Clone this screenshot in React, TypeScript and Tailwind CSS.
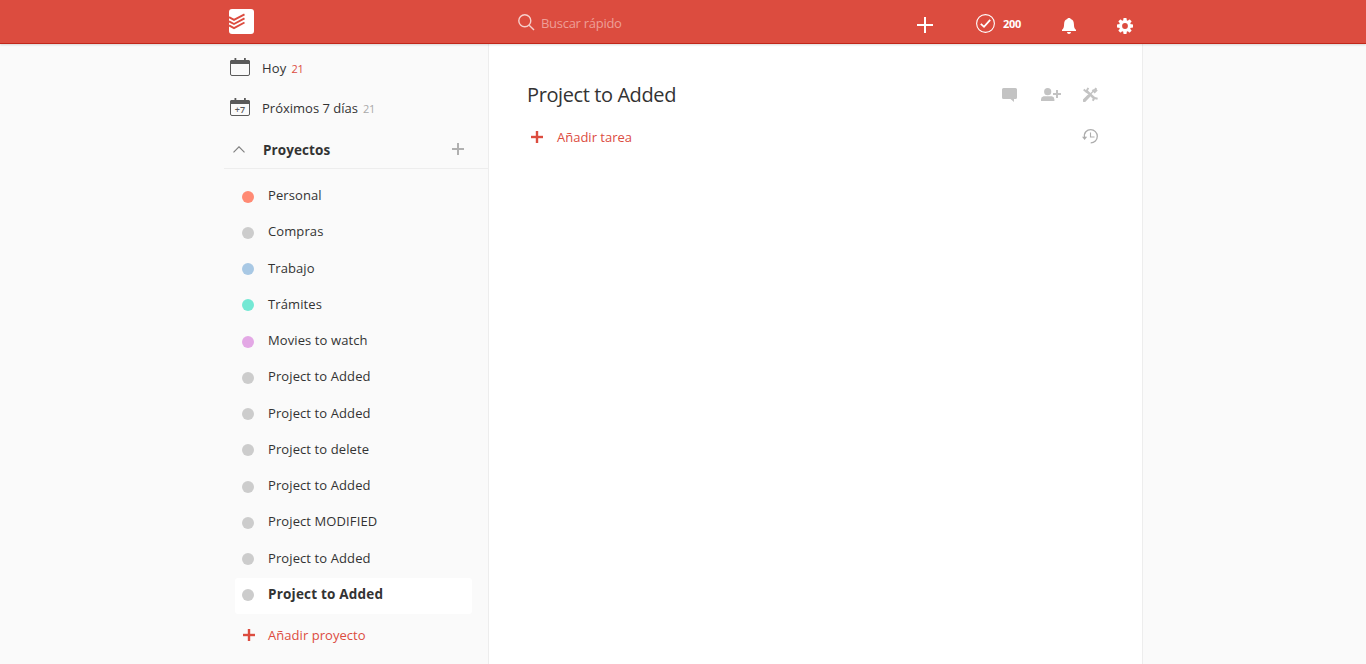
import React from "react";

const projects = [
  { name: "Personal", dot: "bg-[#ff8a74]" },
  { name: "Compras", dot: "bg-[#cccccc]" },
  { name: "Trabajo", dot: "bg-[#a8c8e4]" },
  { name: "Trámites", dot: "bg-[#74e8d4]" },
  { name: "Movies to watch", dot: "bg-[#e3a8e5]" },
  { name: "Project to Added", dot: "bg-[#cccccc]" },
  { name: "Project to Added", dot: "bg-[#cccccc]" },
  { name: "Project to delete", dot: "bg-[#cccccc]" },
  { name: "Project to Added", dot: "bg-[#cccccc]" },
  { name: "Project MODIFIED", dot: "bg-[#cccccc]" },
  { name: "Project to Added", dot: "bg-[#cccccc]" },
  { name: "Project to Added", dot: "bg-[#cccccc]", selected: true },
];

function Logo() {
  return (
    <svg width="25" height="25" viewBox="0 0 25 25" className="ml-[5px] mt-[9px] shrink-0">
      <rect width="25" height="25" rx="3" fill="#fff" />
      <g fill="none" stroke="#dc4c3f" strokeWidth="1.9">
        <path d="M0 8.200 5 10.900 15.500 5.300" />
        <path d="M0 12.300 5 15 15.500 9.400" />
        <path d="M0 16.400 5 19.100 15.500 13.500" />
      </g>
    </svg>
  );
}

function Calendar({ label }: { label?: string }) {
  return (
    <span className="relative block h-[18px] w-5 shrink-0">
      <svg width="20" height="18" viewBox="0 0 20 18" className="block">
        <rect x="0.5" y="2.5" width="19" height="15" rx="1.5" fill="none" stroke="#5a5a5a" />
        <path d="M0 6V3.500Q0 2 1.500 2H18.500Q20 2 20 3.500V6Z" fill="#5a5a5a" />
        <path d="M4.500 0h1.800v3H4.500zM14 0h1.800v3H14z" fill="#5a5a5a" />
      </svg>
      {label && (
        <span className="absolute left-0 top-[6px] w-5 text-center text-[9px] font-semibold leading-[11px] text-[#5a5a5a]">
          {label}
        </span>
      )}
    </span>
  );
}

function Plus({ className, size, weight }: { className: string; size: number; weight: number }) {
  const start = (size - weight) / 2;
  return (
    <svg width={size} height={size} className={className} fill="currentColor">
      <rect x={start} width={weight} height={size} />
      <rect y={start} width={size} height={weight} />
    </svg>
  );
}

function Header() {
  return (
    <header className="relative h-11 border-b border-[#c1271a] bg-[#dc4c3f] shadow-[0_1px_2px_rgba(0,0,0,0.15)]">
      <div className="ml-[224px] flex w-[919px] items-start">
        <Logo />
        <div className="ml-[264px] flex w-[399px] items-start">
          <svg width="17" height="17" viewBox="0 0 17 17" className="mt-[14px]" fill="none" stroke="#f6d0cc" strokeWidth="1.400">
            <circle cx="6.800" cy="6.800" r="6" />
            <path d="m11.200 11.200 4.800 4.800" />
          </svg>
          <span className="ml-[6px] mt-[13px] text-[13px] leading-5 tracking-[-0.28px] text-[#ee9f97]">Buscar rápido</span>
        </div>
        <Plus className="mt-[17px] text-white" size={16} weight={2} />
        <div className="ml-[43px] flex w-[86px] items-start">
          <svg width="19" height="19" viewBox="0 0 19 19" className="mt-[14px]" fill="none" stroke="#fff">
            <circle cx="9.500" cy="9.500" r="8.900" strokeWidth="1.100" />
            <path d="m4.800 9.800 3.200 3 6.200-7" strokeWidth="1.800" />
          </svg>
          <span className="ml-2 mt-4 text-[11px] font-bold leading-4 tracking-[-0.25px] text-white">200</span>
        </div>
        <svg width="14" height="16" viewBox="0 0 14 16" className="mt-[18px]" fill="#fff">
          <path d="M7 0c1 0 1.500.400 1.700 1C11 1.700 11.800 3.500 11.900 6c.1 3.400.6 4.700 2.100 5.800V13H0v-1.200C1.500 10.700 2 9.400 2.100 6 2.200 3.500 3 1.700 5.300 1 5.500.4 6 0 7 0ZM5 14h4c-.2 1.300-.8 2-2 2s-1.800-.7-2-2Z" />
        </svg>
        <svg width="16" height="16" viewBox="0 0 16 16" className="ml-[41px] mt-[18px]" fill="#fff">
          <g>
            <rect x="6.300" y="0" width="3.400" height="16" rx="0.800" />
            <rect x="6.300" y="0" width="3.400" height="16" rx="0.800" transform="rotate(45 8 8)" />
            <rect x="6.300" y="0" width="3.400" height="16" rx="0.800" transform="rotate(90 8 8)" />
            <rect x="6.300" y="0" width="3.400" height="16" rx="0.800" transform="rotate(135 8 8)" />
          </g>
          <circle cx="8" cy="8" r="6" />
          <circle cx="8" cy="8" r="2.900" fill="#dc4c3f" />
        </svg>
      </div>
    </header>
  );
}

function Sidebar() {
  return (
    <aside className="w-[264px] shrink-0 text-[#333]">
      <div className="flex h-10 items-start pl-[6px] pt-[14px]">
        <Calendar />
        <span className="ml-3 text-[13px] leading-5 tracking-[0.2px]">Hoy</span>
        <span className="ml-[5px] mt-px text-[11px] leading-5 tracking-[-0.3px] text-[#dc4c3f]">21</span>
      </div>
      <div className="flex h-10 items-start pl-[6px] pt-[14px]">
        <Calendar label="+7" />
        <span className="ml-3 text-[13px] leading-5">Próximos 7 días</span>
        <span className="ml-[5px] mt-px text-[11px] leading-5 tracking-[-0.3px] text-[#a9a9a9]">21</span>
      </div>
      <div className="flex h-[45px] items-start border-b border-[#ededed] pl-[9px] pr-6">
        <svg width="12" height="7" viewBox="0 0 12 7" className="mt-[22px]" fill="none" stroke="#808080" strokeWidth="1.200">
          <path d="m.500 6.300 5.500-5.500 5.500 5.500" />
        </svg>
        <span className="ml-[18px] mt-4 text-[13.500px] font-bold leading-5 tracking-[0.08px]">Proyectos</span>
        <Plus className="ml-auto mt-[19px] text-[#b0b0b0]" size={12} weight={2} />
      </div>
      <ul className="ml-[11px] mt-[10px] w-[237px]">
        {projects.map((project, i) => (
          <li
            key={i}
            className={
              project.selected
                ? "flex h-[36.25px] items-center rounded-[3px] bg-white pl-[7px] text-[13.500px] font-bold tracking-[0.2px]"
                : "flex h-[36.25px] items-center pl-[7px] text-[13px] tracking-[0.1px]"
            }
          >
            <span className={`mb-px size-3 rounded-full ${project.dot}`} />
            <span className="mb-[4px] ml-[14px] leading-5">{project.name}</span>
          </li>
        ))}
      </ul>
      <div className="mt-[11px] flex items-start pl-[19px] text-[#dc4c3f]">
        <Plus className="mt-[4px]" size={12} weight={2.4} />
        <span className="ml-[13px] text-[13px] leading-5 tracking-[0.05px]">Añadir proyecto</span>
      </div>
    </aside>
  );
}

function ProjectActions() {
  return (
    <div className="flex items-start text-[#c3c3c3]">
      <svg width="16" height="14" viewBox="0 0 16 14" className="mt-[3px]" fill="currentColor">
        <path d="M1.500 0h12Q15 0 15 1.500V9.500Q15 11 13.500 11H12v3L8.500 11h-7Q0 11 0 9.500v-8Q0 0 1.500 0Z" />
      </svg>
      <svg width="20" height="13" viewBox="0 0 20 13" className="ml-[23px] mt-[3px]" fill="currentColor">
        <circle cx="6.700" cy="3.700" r="3.600" />
        <path d="M0 13v-1.700Q0 8.700 2.600 8.300h8.200q2.600.4 2.600 3V13ZM15 2h2v3h3v2h-3v3h-2V7h-3V5h3Z" />
      </svg>
      <svg width="15" height="15" viewBox="0 0 15 15" className="ml-[22px] mt-[2px]" fill="none" stroke="currentColor">
        <path d="m3.500 4 8 7.500" strokeWidth="2.400" />
        <path d="M.700 2.500 3.300 4.700 5.300.900M9.700 13.700l1.700-2.700 3.200.800" strokeWidth="2" />
        <path d="M1.300 13.500 5.600 9.200" strokeWidth="3.200" strokeLinecap="round" />
        <path d="m5.500 9 5.500-5.500" strokeWidth="1.500" />
        <path d="M9.500 2.700 11.700 5l2.300-2.300" strokeWidth="2" />
        <path d="m11.300 3.700 2-2.500" strokeWidth="2" />
      </svg>
    </div>
  );
}

function Main() {
  return (
    <main className="w-[655px] border-x border-[#ededed] bg-white pl-[38px] pr-[43px] pt-[38px]">
      <div className="flex h-[45px] items-start justify-between">
        <h1 className="text-[20px] leading-[26px] tracking-[-0.400px] text-[#333]">Project to Added</h1>
        <div className="pr-px pt-[3px]">
          <ProjectActions />
        </div>
      </div>
      <div className="flex items-start">
        <Plus className="ml-1 mt-[4px] text-[#dc4c3f]" size={12} weight={2.4} />
        <span className="ml-[14px] text-[13px] leading-5 text-[#dc4c3f]">Añadir tarea</span>
        <svg width="17" height="15" viewBox="0 0 17 15" className="ml-auto mt-[2px]" fill="none" stroke="#adadad">
          <path d="M2.600 8.500C1.500 3.500 5 .7 8.700.7A6.600 6.600 0 1 1 8.700 13.900" strokeWidth="1.300" />
          <path d="M0 7.800h5.200L2.600 10.900Z" fill="#adadad" stroke="none" />
          <path d="M8.500 3.500v4.500h4" strokeWidth="1.100" />
        </svg>
      </div>
    </main>
  );
}

export default function App() {
  return (
    <div className="flex h-[664px] flex-col overflow-hidden bg-[#fafafa] font-['Open_Sans','Noto_Sans',sans-serif]">
      <Header />
      <div className="ml-[224px] flex w-[919px] flex-1">
        <Sidebar />
        <Main />
      </div>
    </div>
  );
}
